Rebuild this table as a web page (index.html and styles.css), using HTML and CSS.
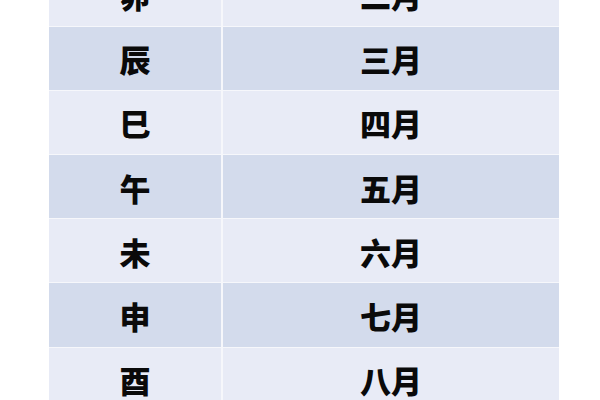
FILE: index.html
```html
<!DOCTYPE html>
<html lang="zh">
<head>
<meta charset="utf-8">
<link rel="stylesheet" href="styles.css">
</head>
<body>
<div class="table">
  <div class="cell light">卯</div><div class="cell light">二月</div>
  <div class="cell dark">辰</div><div class="cell dark">三月</div>
  <div class="cell light">巳</div><div class="cell light">四月</div>
  <div class="cell dark">午</div><div class="cell dark">五月</div>
  <div class="cell light">未</div><div class="cell light">六月</div>
  <div class="cell dark">申</div><div class="cell dark">七月</div>
  <div class="cell light">酉</div><div class="cell light">八月</div>
</div>
</body>
</html>
```
FILE: styles.css
```css
html, body {
  margin: 0;
  padding: 0;
  background: #ffffff;
  width: 600px;
  height: 400px;
  overflow: hidden;
}
.table {
  margin-top: -37.5px;
  margin-left: 49px;
  width: 510px;
  display: grid;
  grid-template-columns: 172px 336px;
  grid-auto-rows: 63.2px;
  column-gap: 2px;
  row-gap: 1px;
  background: #f6f7fb;
}
.cell {
  display: flex;
  align-items: center;
  justify-content: center;
  font-family: "Noto Sans CJK SC", "Noto Sans", sans-serif;
  font-weight: 900;
  font-size: 31px;
  color: #0a0a0a;
  padding-top: 1px;
}
.light {
  background: #e8ebf6;
}
.dark {
  background: #d3dbec;
}
```
